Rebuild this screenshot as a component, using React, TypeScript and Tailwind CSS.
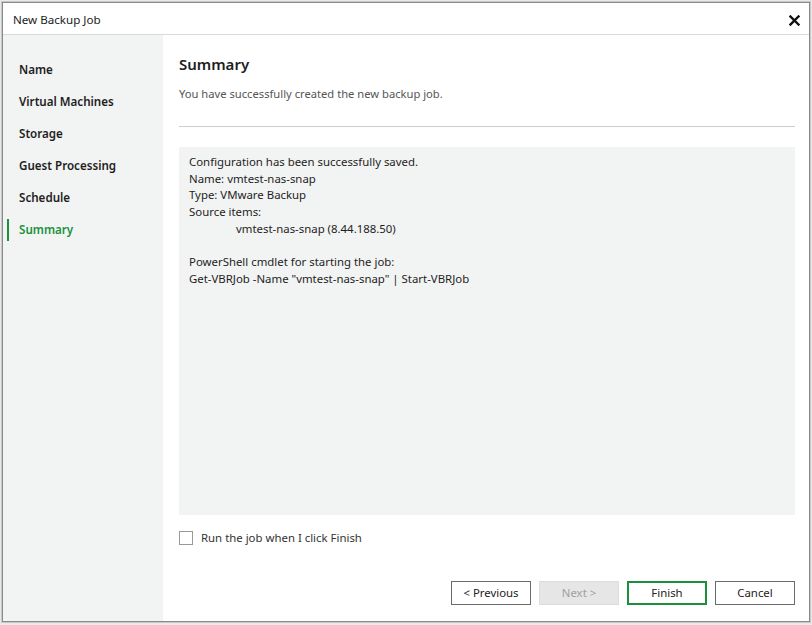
import React from "react";

const nav = ["Name", "Virtual Machines", "Storage", "Guest Processing", "Schedule", "Summary"];

export default function App() {
  const font = { fontFamily: '"Noto Sans", "Open Sans", sans-serif' };
  return (
    <div className="w-[812px] h-[625px] bg-[#e9e9e9] pl-[2px] pt-[2px] overflow-hidden" style={font}>
      <div className="w-[808px] h-[620px] border border-[#8a8a8a] bg-white flex flex-col shadow-[0_0_0_1px_#c8c8c8]">
        <div className="h-[32px] shrink-0 border-b border-[#dadada] flex items-center justify-between pl-[10px] pr-[8px] pt-[3px]">
          <span className="text-[11.6px] text-[#222]">New Backup Job</span>
          <svg width="11" height="11" viewBox="0 0 11 11" className="mr-[1px]">
            <path d="M1.5 1.5 L9.5 9.5 M9.5 1.5 L1.5 9.5" stroke="#111" strokeWidth="2.4" strokeLinecap="square" />
          </svg>
        </div>
        <div className="flex flex-1 min-h-0">
          <div className="w-[160px] shrink-0 bg-[#f2f3f3] pt-[19px]">
            {nav.map((n) => {
              const active = n === "Summary";
              return (
                <div key={n} className="relative h-[32px] flex items-center pl-[16px]">
                  {active && <div className="absolute left-[4px] top-[5px] w-[2px] h-[22px] bg-[#19923d]" />}
                  <span className={`text-[11.6px] font-semibold ${active ? "text-[#19923d]" : "text-[#1e1e1e]"}`}>{n}</span>
                </div>
              );
            })}
          </div>
          <div className="flex-1 flex flex-col pl-[16px] pr-[14px]">
            <div className="pt-[18px] text-[15px] font-semibold text-[#1e1e1e] leading-[22px]">Summary</div>
            <div className="mt-[11px] text-[11.2px] text-[#555] leading-[16px]">You have successfully created the new backup job.</div>
            <div className="mt-[24px] h-px bg-[#c9cfcf]" />
            <div className="mt-[20px] h-[368px] bg-[#f2f3f3] px-[10px] pt-[7px] text-[11.4px] text-[#1e1e1e] leading-[16.7px]">
              <div>Configuration has been successfully saved.</div>
              <div>Name: vmtest-nas-snap</div>
              <div>Type: VMware Backup</div>
              <div>Source items:</div>
              <div className="pl-[47px]">vmtest-nas-snap (8.44.188.50)</div>
              <div>&nbsp;</div>
              <div>PowerShell cmdlet for starting the job:</div>
              <div>Get-VBRJob -Name "vmtest-nas-snap" | Start-VBRJob</div>
            </div>
            <div className="mt-[14px] flex items-center">
              <div className="w-[14px] h-[14px] border border-[#999] bg-white" />
              <span className="ml-[8px] text-[11.4px] text-[#333]">Run the job when I click Finish</span>
            </div>
            <div className="mt-auto mb-[16px] flex justify-end gap-[8px]">
              <button className="w-[80px] h-[24px] border border-[#6a6a6a] bg-white text-[11.4px] text-[#222]">&lt; Previous</button>
              <button className="w-[80px] h-[24px] border border-[#dcdcdc] bg-[#e6e6e6] text-[11.4px] text-[#a0a0a0]">Next &gt;</button>
              <button className="w-[80px] h-[24px] border-2 border-[#1a8f3c] bg-white text-[11.4px] text-[#222]">Finish</button>
              <button className="w-[80px] h-[24px] border border-[#6a6a6a] bg-white text-[11.4px] text-[#222]">Cancel</button>
            </div>
          </div>
        </div>
      </div>
    </div>
  );
}
